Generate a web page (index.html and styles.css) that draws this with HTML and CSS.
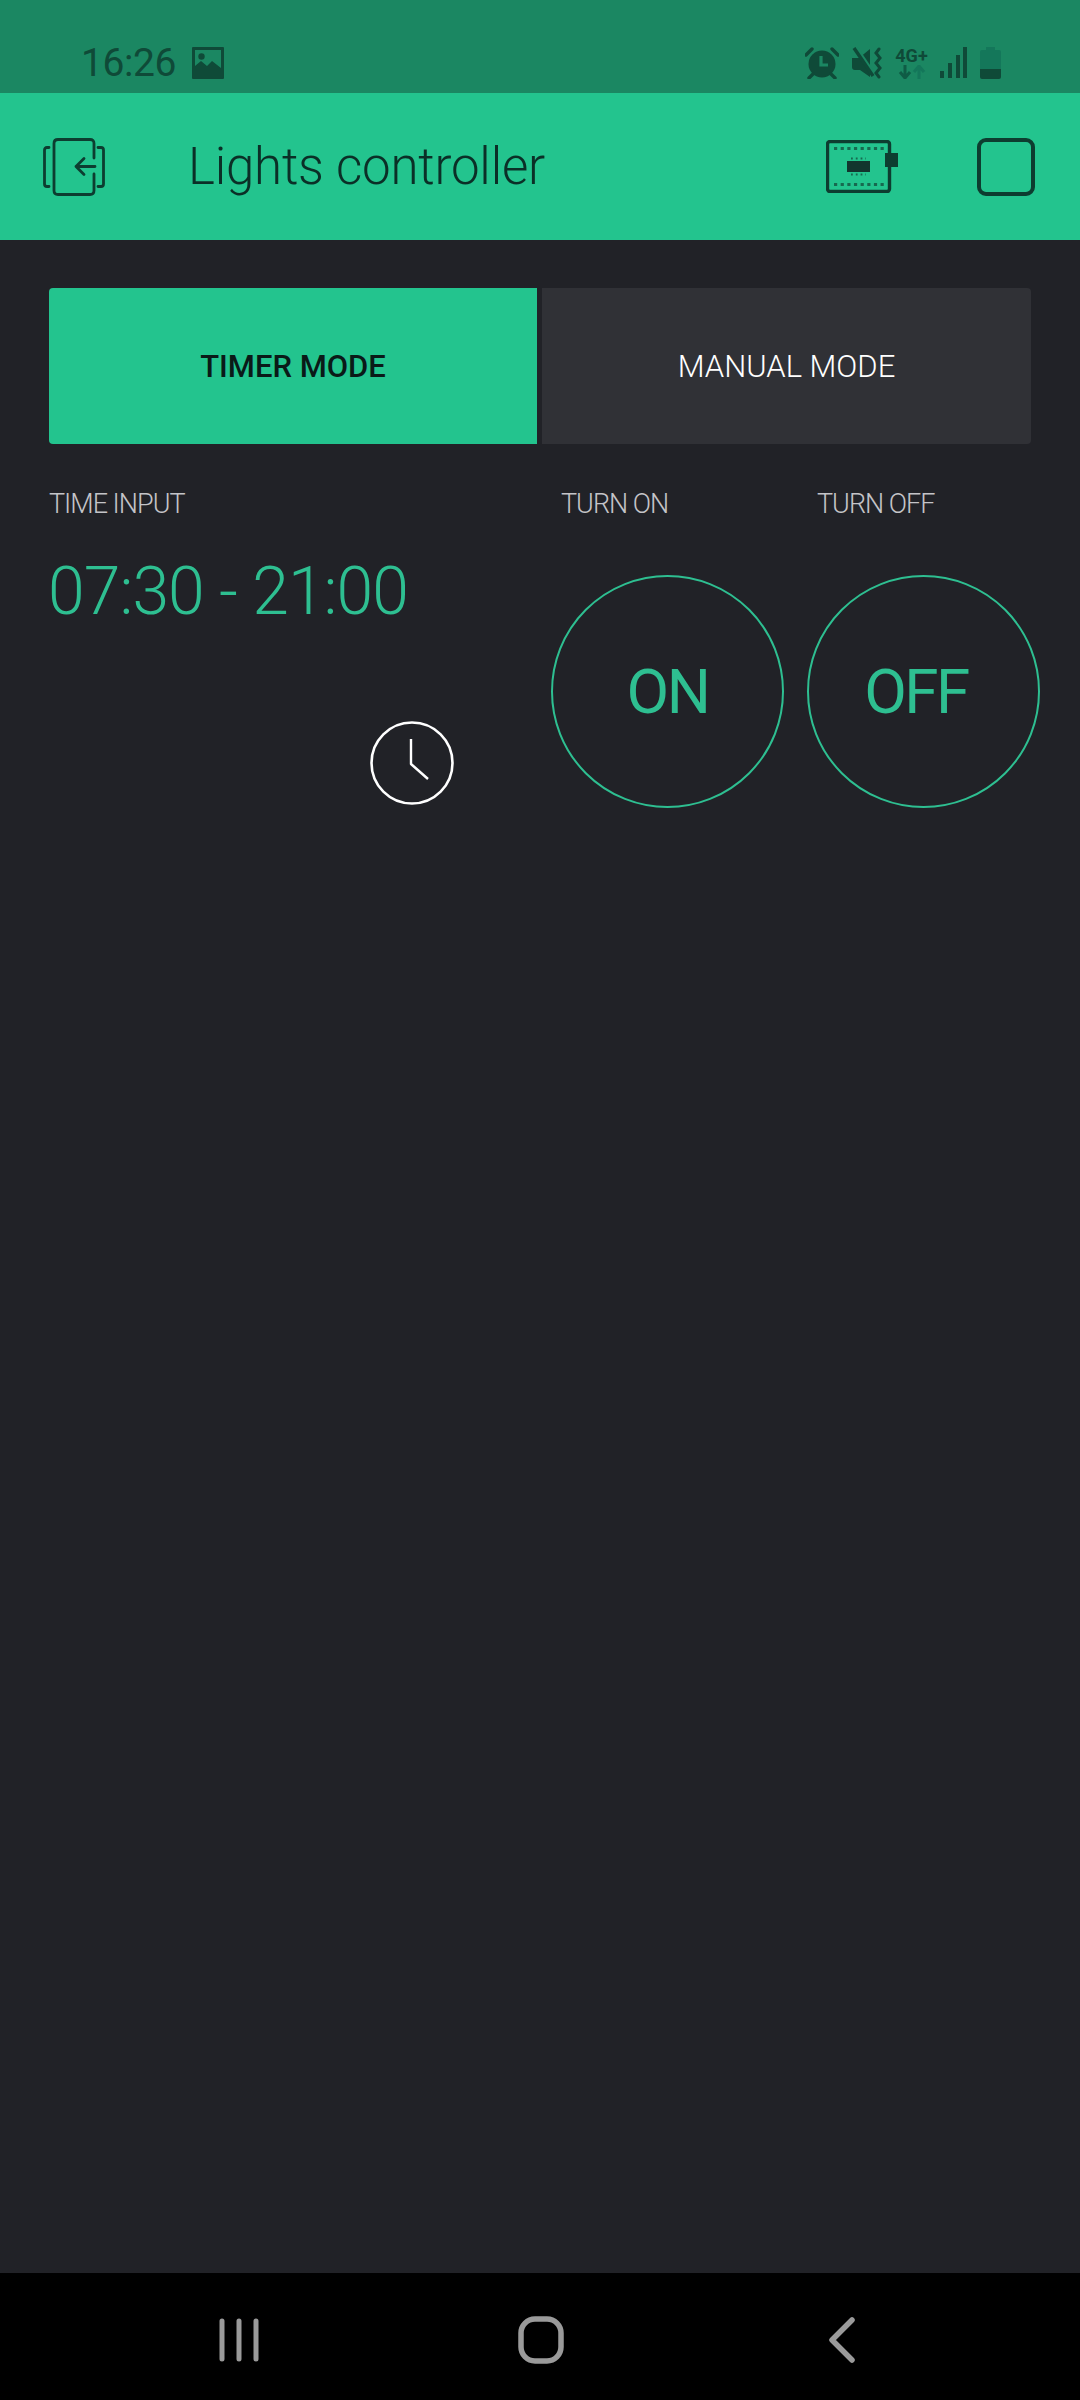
FILE: index.html
```html
<!DOCTYPE html>
<html lang="en">
<head>
    <meta charset="UTF-8">
    <title>Lights controller</title>
    <link rel="stylesheet" href="styles.css">
</head>
<body>
<div class="statusbar">
    <span class="clock-text">16:26</span>
    <svg class="pic-icon" width="32" height="32" viewBox="0 0 32 32">
        <path fill="#0f4a38" fill-rule="evenodd" d="M1 0h30a1 1 0 0 1 1 1v30a1 1 0 0 1-1 1H1a1 1 0 0 1-1-1V1a1 1 0 0 1 1-1zM3 3v16l6-5 6 5 5-5 9 7V3z"/>
        <circle cx="9.500" cy="9.500" r="3.200" fill="#0f4a38"/>
    </svg>
    <div class="status-right">
        <svg width="34" height="32" viewBox="0 0 34 32">
            <circle cx="17" cy="17" r="13.500" fill="#0f4a38"/>
            <path d="M16 9v9h7" fill="none" stroke="#1b8762" stroke-width="3.200"/>
            <path d="M1 8l6-6M33 8l-6-6M8 27l-4 4M26 27l4 4" stroke="#0f4a38" stroke-width="3.400" stroke-linecap="round"/>
        </svg>
        <svg width="31" height="32" viewBox="0 0 31 32">
            <path fill="#0f4a38" d="M0 11h7L18 2v28L8 23H3q-3 0-3-3z"/>
            <path d="M4 0l19 28" stroke="#1b8762" stroke-width="3"/>
            <path d="M2 1l19 28" stroke="#0f4a38" stroke-width="3.400"/>
            <path d="M27 2l-3 4 4 5-4 5 4 5-4 5 3 4" fill="none" stroke="#0f4a38" stroke-width="3" stroke-linecap="round"/>
        </svg>
        <div class="net">
            <span class="net-text">4G+</span>
            <svg width="30" height="14" viewBox="0 0 30 14">
                <path d="M8 0v12M3 7l5 6 5-6" fill="none" stroke="#0f5c45" stroke-width="3"/>
                <path d="M22 14V2M17 7l5-6 5 6" fill="none" stroke="#14775a" stroke-width="3"/>
            </svg>
        </div>
        <svg width="27" height="31" viewBox="0 0 27 31">
            <path fill="#0f4a38" d="M0 24h4v7H0zM8 16h4v15H8zM16 8h4v23h-4zM23 0h4v31h-4z"/>
        </svg>
        <svg width="21" height="32" viewBox="0 0 21 32">
            <path fill="#14775a" d="M6 0h9v3h4q2 0 2 2v17H0V5q0-2 2-2h4z"/>
            <path fill="#0f4a38" d="M0 22h21v8q0 2-2 2H2q-2 0-2-2z"/>
        </svg>
    </div>
</div>

<div class="header">
    <svg class="back-icon" width="62" height="58" viewBox="0 0 62 58">
        <g fill="none" stroke="#0d3d30" stroke-width="2.800" stroke-linecap="round" stroke-linejoin="round">
            <path d="M51 20V5.500q0-4-4-4H15q-4 0-4 4v47q0 4 4 4h32q4 0 4-4V36"/>
            <path d="M6 9.500H4Q1.500 9.500 1.500 12v34Q1.500 48.500 4 48.500h2"/>
            <path d="M55 9.500h3q2.500 0 2.500 2.500v34q0 2.500-2.500 2.500h-3"/>
            <path d="M52 28.500H33M41 20.500l-8 8 8 8"/>
        </g>
    </svg>
    <span class="title">Lights controller</span>
    <svg class="chip-icon" width="72" height="53" viewBox="0 0 72 53">
        <rect x="1.500" y="1.500" width="62" height="50" rx="2.500" fill="none" stroke="#0d3d30" stroke-width="3.400"/>
        <path d="M59 13h13v14H59z" fill="#0d3d30"/>
        <path d="M8 8.500h53M8 44.500h53" stroke="#17694f" stroke-width="3.200" stroke-dasharray="3.200 3.450"/>
        <rect x="21" y="21" width="23" height="11" fill="#12352e"/>
        <path d="M25 18.500h15M25 34.500h15" stroke="#17694f" stroke-width="1.800" stroke-dasharray="1.800 3"/>
    </svg>
    <div class="square-icon"></div>
</div>

<div class="main">
    <div class="modes">
        <div class="mode mode-on">TIMER MODE</div>
        <div class="mode mode-off">MANUAL MODE</div>
    </div>

    <div class="widgets">
        <div class="time-widget">
            <div class="label">TIME INPUT</div>
            <div class="time-value">07:30 - 21:00</div>
            <svg class="time-clock" width="84" height="84" viewBox="0 0 84 84">
                <circle cx="42" cy="42" r="40.500" fill="none" stroke="#fff" stroke-width="2.600"/>
                <path d="M41 18v25l17 15" fill="none" stroke="#fff" stroke-width="2.400" stroke-linejoin="round"/>
            </svg>
        </div>
        <div class="toggle-widget toggle-first">
            <div class="label toggle-label">TURN ON</div>
            <div class="round-btn">ON</div>
        </div>
        <div class="toggle-widget">
            <div class="label toggle-label">TURN OFF</div>
            <div class="round-btn round-off">OFF</div>
        </div>
    </div>
</div>

<div class="navbar">
    <svg width="40" height="44" viewBox="0 0 40 44">
        <path d="M3 3v38M20 3v38M37 3v38" stroke="#9a9a9a" stroke-width="5" stroke-linecap="round"/>
    </svg>
    <svg width="46" height="48" viewBox="0 0 46 48">
        <rect x="3" y="3" width="40" height="42" rx="14" fill="none" stroke="#9a9a9a" stroke-width="5.500"/>
    </svg>
    <svg class="nav-back" width="28" height="46" viewBox="0 0 28 46">
        <path d="M24 3L4 23l20 20" fill="none" stroke="#9a9a9a" stroke-width="5.500" stroke-linecap="round" stroke-linejoin="round"/>
    </svg>
</div>
</body>
</html>
```

FILE: styles.css
```css
* {
    box-sizing: border-box;
}

body {
    margin: 0;
    width: 1080px;
    height: 2400px;
    display: flex;
    flex-direction: column;
    background-color: #212227;
    font-family: 'Roboto', 'Liberation Sans', sans-serif;
}

.statusbar {
    height: 93px;
    flex: none;
    display: flex;
    align-items: center;
    padding: 32px 79px 0 81px;
    background-color: #1b8762;
}

.clock-text {
    font-size: 39px;
    letter-spacing: -0.4px;
    color: #0f4a38;
}

.pic-icon {
    margin-left: 16px;
}

.status-right {
    margin-left: auto;
    display: flex;
    align-items: center;
    gap: 13px;
}

.net {
    display: flex;
    flex-direction: column;
    align-items: center;
    width: 31px;
}

.net-text {
    font-size: 18px;
    line-height: 18px;
    font-weight: 700;
    color: #0f4a38;
}

.header {
    height: 147px;
    flex: none;
    display: flex;
    align-items: center;
    padding-left: 43px;
    background-color: #23c48e;
}

.title {
    margin-left: 83px;
    font-size: 51px;
    font-weight: 300;
    letter-spacing: -0.2px;
    color: #0b2f27;
}

.chip-icon {
    margin-left: auto;
}

.square-icon {
    width: 58px;
    height: 58px;
    margin: 0 45px 0 79px;
    border: 4px solid #0d3d30;
    border-radius: 9px;
}

.main {
    flex: 1;
    padding: 48px 0 0 49px;
}

.modes {
    display: flex;
    gap: 5px;
    width: 982px;
    height: 156px;
}

.mode {
    display: flex;
    align-items: center;
    justify-content: center;
    font-size: 31px;
}

.mode-on {
    width: 488px;
    background-color: #23c48e;
    border-radius: 4px 0 0 4px;
    font-weight: 500;
    color: #0a1a18;
}

.mode-off {
    flex: 1;
    background-color: #303136;
    border-radius: 0 4px 4px 0;
    font-weight: 300;
    color: #fff;
}

.widgets {
    display: flex;
    margin-top: 44px;
}

.label {
    font-size: 27px;
    line-height: 32px;
    font-weight: 300;
    letter-spacing: -1px;
    color: #c4c4c8;
}

.time-widget {
    width: 502px;
}

.time-value {
    margin: 33px 0 0 -1px;
    font-size: 66px;
    line-height: 78px;
    font-weight: 300;
    letter-spacing: -0.9px;
    color: #2ebf91;
}

.time-clock {
    display: block;
    margin: 90px 0 0 321px;
}

.toggle-widget {
    width: 233px;
}

.toggle-first {
    margin-right: 23px;
}

.toggle-label {
    padding-left: 10px;
}

.round-btn {
    width: 233px;
    height: 233px;
    margin-top: 55px;
    display: flex;
    align-items: center;
    justify-content: center;
    border: 2px solid #2ebf91;
    border-radius: 50%;
    font-size: 62px;
    letter-spacing: -2.5px;
    color: #2ebf91;
}

.round-off {
    padding-right: 15px;
}

.navbar {
    height: 127px;
    flex: none;
    display: flex;
    align-items: center;
    padding: 7px 0 0 219px;
    gap: 259px;
    background-color: #000;
}

.nav-back {
    margin-left: 5px;
}
```
